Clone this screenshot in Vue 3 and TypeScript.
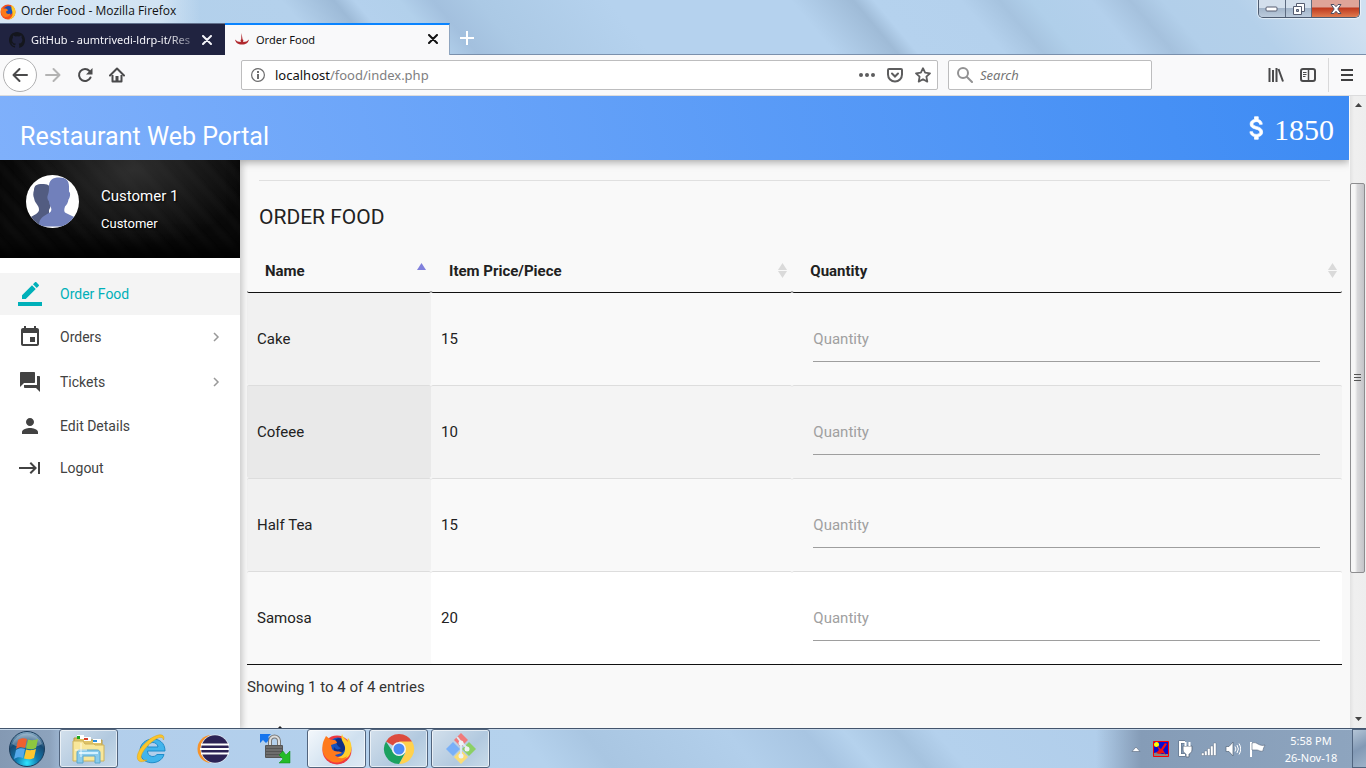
<script setup lang="ts">
import { ref } from 'vue'

interface Item { name: string; price: number; qty: string }
interface MenuItem { label: string; icon: string; sub?: boolean; active?: boolean }

const items = ref<Item[]>([
  { name: 'Cake', price: 15, qty: '' },
  { name: 'Cofeee', price: 10, qty: '' },
  { name: 'Half Tea', price: 15, qty: '' },
  { name: 'Samosa', price: 20, qty: '' },
])

const menu: MenuItem[] = [
  { label: 'Order Food', active: true, icon: 'M17.75 7L14 3.25l-10 10V17h3.75l10-10zm2.96-2.96c.39-.39.39-1.02 0-1.41L18.37.29c-.39-.39-1.02-.39-1.41 0L15 2.25 18.75 6l1.96-1.96zM0 20h24v4H0z' },
  { label: 'Orders', sub: true, icon: 'M17 12h-5v5h5v-5zM16 1v2H8V1H6v2H5c-1.11 0-1.99.9-1.99 2L3 19c0 1.1.89 2 2 2h14c1.1 0 2-.9 2-2V5c0-1.1-.9-2-2-2h-1V1h-2zm3 18H5V8h14v11z' },
  { label: 'Tickets', sub: true, icon: 'M21 6h-2v9H6v2c0 .55.45 1 1 1h11l4 4V7c0-.55-.45-1-1-1zm-4 6V3c0-.55-.45-1-1-1H3c-.55 0-1 .45-1 1v14l4-4h10c.55 0 1-.45 1-1z' },
  { label: 'Edit Details', icon: 'M12 12c2.21 0 4-1.79 4-4s-1.79-4-4-4-4 1.79-4 4 1.79 4 4 4zm0 2c-2.67 0-8 1.34-8 4v2h16v-2c0-2.66-5.33-4-8-4z' },
  { label: 'Logout', icon: 'M11.59 7.41L15.17 11H1v2h14.17l-3.59 3.59L13 18l6-6-6-6-1.41 1.41zM20 6v12h2V6h-2z' },
]

const columns = [
  { label: 'Name', cls: 'c-name', sorted: true },
  { label: 'Item Price/Piece', cls: 'c-price', sorted: false },
  { label: 'Quantity', cls: 'c-qty', sorted: false },
]

const search = ref('')
</script>

<template>
  <div class="desktop">
    <div class="aero">
      <div class="titlebar">
        <svg class="fx-small" viewBox="0 0 32 32" aria-hidden="true">
          <circle cx="16" cy="16" r="15" fill="#f5501e" />
          <circle cx="17" cy="13" r="9" fill="#1d4fb5" />
          <path d="M23 2c5 3 8 8 8 14a15 15 0 0 1-15 15c6-2 10-7 9-13 0-5-3-7-2-16z" fill="#ffc928" />
          <path d="M3 7l5 3c4-2 7 0 8 3l-4 2c0 5 5 6 9 4-1 5-6 8-11 7C3 24 0 15 3 7z" fill="#fb7a1b" />
        </svg>
        <span class="title">Order Food - Mozilla Firefox</span>
        <div class="winbtns">
          <button class="wb min" aria-label="Minimize"><svg width="14" height="8"><rect x="1" y="2" width="11" height="4" rx="1" fill="#fff" stroke="#565d70" /></svg></button>
          <button class="wb max" aria-label="Restore"><svg width="14" height="14"><g fill="#fff" stroke="#565d70"><path d="M4.500 1.500h8v8h-8z" /><path d="M1.500 4.500h8v8h-8z" /><path d="M4.500 7.500h2v2h-2z" fill="#9aabc2" /></g></svg></button>
          <button class="wb close" aria-label="Close"><svg width="14" height="12" viewBox="0 0 14 12"><path d="M2 1.500h3l2 2.200 2-2.200h3L8.800 6l3.200 4.500H9L7 8.300l-2 2.200H2L5.200 6z" fill="#fff" stroke="#4c5064" /></svg></button>
        </div>
      </div>
      <div class="tabs">
        <div class="tab dark">
          <svg class="gh" viewBox="0 0 16 16" aria-hidden="true"><path fill="#14161d" d="M8 0C3.580 0 0 3.580 0 8c0 3.540 2.290 6.530 5.470 7.590.4.070.550-.170.550-.380V13.700c-2.010.370-2.530-.490-2.690-.940-.360-.920-.900-1.300-1.230-1.430.9-.5 1.500.2 1.900.9.700 1.200 1.900.9 2.300.650.070-.520.280-.870.510-1.070-1.780-.200-3.640-.890-3.640-3.950 0-.870.310-1.590.820-2.150-.080-.200-.360-1.020.080-2.120 0 0 .670-.210 2.200.820a7.600 7.600 0 0 1 4 0c1.530-1.040 2.200-.820 2.200-.820.440 1.100.160 1.920.080 2.120.510.560.820 1.270.820 2.150 0 3.070-1.870 3.750-3.650 3.950.290.250.540.730.540 1.480v2.200c0 .210.150.460.550.380A8 8 0 0 0 16 8c0-4.420-3.580-8-8-8z" /></svg>
          <span class="tabtext fade">GitHub - aumtrivedi-ldrp-it/Res</span>
          <button class="x" aria-label="Close tab"><svg width="10" height="10"><path d="M1 1l8 8M9 1L1 9" stroke="currentColor" stroke-width="2" stroke-linecap="round" /></svg></button>
        </div>
        <div class="tab live">
          <svg class="gh" viewBox="0 0 16 16" aria-hidden="true"><path d="M7.500 2l1.100 6.500c1 0 1 1.500.4 2.500 2.500 0 4.500-.8 6-2.500-.5 3-3 5-7 5s-6.500-2-7-5c1.500 1.700 3.500 2.500 6 2.500-.6-1-.6-2.500.2-2.500z" fill="#b0282d" /></svg>
          <span class="tabtext">Order Food</span>
          <button class="x" aria-label="Close tab"><svg width="10" height="10"><path d="M1 1l8 8M9 1L1 9" stroke="currentColor" stroke-width="2" stroke-linecap="round" /></svg></button>
        </div>
        <button class="newtab" aria-label="New tab"><svg width="14" height="14"><path d="M7 0v14M0 7h14" stroke="#fff" stroke-width="2" /></svg></button>
      </div>
    </div>

    <div class="toolbar">
      <button class="nav back" aria-label="Back"><svg width="16" height="16"><path d="M15 8H2M7.500 2L1.500 8l6 6" fill="none" stroke="#4a4a4b" stroke-width="2" stroke-linecap="round" stroke-linejoin="round" /></svg></button>
      <button class="nav" aria-label="Forward"><svg width="16" height="16"><path d="M1 8h13M8.500 2l6 6-6 6" fill="none" stroke="#b3b3b3" stroke-width="2" stroke-linecap="round" stroke-linejoin="round" /></svg></button>
      <button class="nav" aria-label="Reload"><svg width="16" height="16"><path d="M13.500 10.500a6 6 0 1 1-1-6.500" fill="none" stroke="#4a4a4b" stroke-width="2" stroke-linecap="round" /><path d="M15.500 1v6.500H9z" fill="#4a4a4b" /></svg></button>
      <button class="nav" aria-label="Home"><svg width="16" height="16"><path d="M1 8.500L8 1.500l7 7" fill="none" stroke="#4a4a4b" stroke-width="2" stroke-linecap="round" stroke-linejoin="round" /><path d="M3.500 8v6.500h9V8" fill="none" stroke="#4a4a4b" stroke-width="2" stroke-linejoin="round" /><path d="M6.500 9h3v6h-3z" fill="#4a4a4b" /></svg></button>
      <div class="urlbar">
        <svg width="14" height="14" aria-hidden="true"><circle cx="7" cy="7" r="6.400" fill="none" stroke="#6d6d6e" stroke-width="1.200" /><path d="M7 6v5M7 3v2" stroke="#6d6d6e" stroke-width="2" /></svg>
        <span class="url">localhost<span>/food/index.php</span></span>
        <button aria-label="Page actions"><svg width="16" height="16" fill="#5d5d5e"><circle cx="2" cy="8" r="2" /><circle cx="8" cy="8" r="2" /><circle cx="14" cy="8" r="2" /></svg></button>
        <button aria-label="Pocket"><svg width="16" height="16"><path d="M2 2h12c.6 0 1 .4 1 1v4.500a7 7 0 0 1-14 0V3c0-.6.400-1 1-1z" fill="none" stroke="#5d5d5e" stroke-width="2" /><path d="M5 6.500l3 3 3-3" fill="none" stroke="#5d5d5e" stroke-width="2" stroke-linecap="round" /></svg></button>
        <button aria-label="Bookmark"><svg width="16" height="16"><path d="M8 1.200l2.100 4.500 4.900.6-3.600 3.400.9 4.900L8 12.200l-4.300 2.400.9-4.900L1 6.300l4.900-.6z" fill="none" stroke="#5d5d5e" stroke-width="1.800" stroke-linejoin="round" /></svg></button>
      </div>
      <div class="searchbar">
        <svg width="16" height="16" aria-hidden="true"><circle cx="6" cy="6" r="5" fill="none" stroke="#929293" stroke-width="2" /><path d="M10 10l5 5" stroke="#929293" stroke-width="2" stroke-linecap="round" /></svg>
        <input v-model="search" type="text" placeholder="Search" aria-label="Search" />
      </div>
      <div class="tools">
        <button aria-label="Library"><svg width="16" height="16"><path d="M1.500 1v14M5 3v12M8.500 1v14M10.500 2l4.500 12.500" stroke="#4a4a4b" stroke-width="2" /></svg></button>
        <button aria-label="Sidebars"><svg width="16" height="14"><rect x="1" y="1" width="14" height="12" rx="2" fill="none" stroke="#4a4a4b" stroke-width="2" /><path d="M8.500 1v12" stroke="#4a4a4b" stroke-width="1.500" /><path d="M3 4.500h3.500M3 6.500h3.500M3 8.500h2.500" stroke="#4a4a4b" /></svg></button>
        <span class="divider"></span>
        <button aria-label="Menu"><svg width="12" height="12"><path d="M0 1h12M0 6h12M0 11h12" stroke="#3f3f40" stroke-width="2" /></svg></button>
      </div>
    </div>

    <div class="viewport">
      <div class="page">
        <header class="appbar">
          <h1>Restaurant Web Portal</h1>
          <div class="balance">
            <svg viewBox="0 0 24 24" aria-hidden="true"><path fill="#fff" stroke="#fff" stroke-width=".6" d="M11.800 10.900c-2.270-.590-3-1.200-3-2.150 0-1.090 1.010-1.850 2.700-1.850 1.780 0 2.440.850 2.500 2.100h2.210c-.070-1.720-1.120-3.300-3.210-3.810V3h-3v2.160c-1.940.420-3.500 1.680-3.500 3.610 0 2.310 1.910 3.460 4.700 4.130 2.500.6 3 1.480 3 2.410 0 .690-.490 1.790-2.700 1.790-2.060 0-2.870-.920-2.980-2.100h-2.200c.120 2.190 1.760 3.420 3.680 3.830V21h3v-2.150c1.950-.370 3.500-1.500 3.500-3.550 0-2.840-2.430-3.810-4.700-4.400z" /></svg>
            <span>1850</span>
          </div>
        </header>
        <div class="body">
          <aside class="side">
            <div class="user">
              <svg class="avatar" viewBox="0 0 53 53" role="img" aria-label="Avatar">
                <defs><clipPath id="av"><circle cx="26.500" cy="26.500" r="26.500" /></clipPath></defs>
                <g clip-path="url(#av)">
                  <path fill="#fff" d="M0 0h53v53H0z" />
                  <path fill="#525c81" d="M8 15c0-4.500 3-6 8-6s9 1 9 6v13c0 3-1 5-2 7v7l-8 8H5v-8c3-2 8-4 8-7 0-3-1-4-3-7-1-1-1.500-3-2-5-1-2-1-5 0-8z" />
                  <path fill="#7180bb" d="M23 11c0-6 4-8.500 10-8.500 7 0 10 3 10 9v5c2 2 1 6-.5 8-.5 3-1.500 5-3.500 7-1 3-1 5 0 6 3 2 7 3 10 5v9H13c0-7 2-9 9-13 3-1 4-3 3-6-1-2-2-4-2-6-2-2-2-5-1-7 1-3 1-5 1-8z" />
                </g>
              </svg>
              <div class="who"><strong>Customer 1</strong><span>Customer</span></div>
            </div>
            <nav>
              <a v-for="m in menu" :key="m.label" href="#" :class="{ active: m.active, sub: m.sub }">
                <svg width="24" height="24" viewBox="0 0 24 24" aria-hidden="true"><path :d="m.icon" fill="currentColor" /></svg>
                <span>{{ m.label }}</span>
                <svg v-if="m.sub" class="chev" width="8" height="10" viewBox="0 0 8 10" aria-hidden="true"><path d="M2 1l4 4-4 4" fill="none" stroke="#999" stroke-width="1.500" /></svg>
              </a>
            </nav>
          </aside>
          <main>
            <hr />
            <h2>ORDER FOOD</h2>
            <table>
              <thead>
                <tr>
                  <th v-for="c in columns" :key="c.label" :class="c.cls" scope="col">
                    <div class="th">
                      <span>{{ c.label }}</span>
                      <svg width="9" height="15" viewBox="0 0 9 15" aria-hidden="true">
                        <path d="M0 7l4.500-7L9 7z" :fill="c.sorted ? '#8080dc' : '#dadada'" />
                        <path v-if="!c.sorted" d="M0 8l4.500 7L9 8z" fill="#dadada" />
                      </svg>
                    </div>
                  </th>
                </tr>
              </thead>
              <tbody>
                <tr v-for="(it, i) in items" :key="it.name">
                  <td>{{ it.name }}</td>
                  <td>{{ it.price }}</td>
                  <td class="qty"><input :id="`q${i}`" v-model="it.qty" type="text" placeholder="Quantity" :aria-label="`Quantity of ${it.name}`" /></td>
                </tr>
              </tbody>
            </table>
            <p class="info">Showing 1 to 4 of 4 entries</p>
            <svg class="peek" width="10" height="6" viewBox="0 0 10 6" aria-hidden="true"><path d="M0 5l5-5 5 5z" fill="#222" /></svg>
          </main>
        </div>
      </div>
      <div class="scroll">
        <svg width="7" height="4" aria-hidden="true"><path d="M0 4l3.500-4L7 4z" fill="#444" /></svg>
        <div class="track"><div class="thumb"><i></i><i></i><i></i></div></div>
        <svg width="7" height="4" aria-hidden="true"><path d="M0 0l3.500 4L7 0z" fill="#444" /></svg>
      </div>
    </div>

    <footer class="taskbar">
      <button class="start" aria-label="Start">
        <svg width="38" height="38" viewBox="0 0 38 38">
          <defs>
            <radialGradient id="orb" cx=".5" cy=".9" r=".9"><stop offset="0" stop-color="#2ee6ff" /><stop offset=".35" stop-color="#1179ae" /><stop offset=".7" stop-color="#174a73" /><stop offset="1" stop-color="#8fb2cc" /></radialGradient>
          </defs>
          <circle cx="19" cy="19" r="17.500" fill="url(#orb)" stroke="#1b3c5b" />
          <path d="M4 14a16 16 0 0 1 30 0c-8 5-22 5-30 0z" fill="#fff" opacity=".28" />
          <path d="M10 10c3-2 6-2 9-1l-2 9c-3-1-6-1-9 1z" fill="#ee6030" />
          <path d="M20 9.500c3 1 6 1 10-.5l-2 9c-4 2-7 1-10 .5z" fill="#8ec73f" />
          <path d="M8 20c3-2 6-2 9-1l-2 9c-3-1-6-1-9 1z" fill="#55a9ea" />
          <path d="M18 19.500c3 1 6 1 10-.5l-2 9c-4 2-7 1-10 .5z" fill="#fdc72f" />
        </svg>
      </button>
      <div class="apps">
        <button class="app open" aria-label="Explorer">
          <svg width="34" height="32" viewBox="0 0 34 32">
            <path d="M2 5h10l2 2h16v20H2z" fill="#dfc468" stroke="#b89a42" />
            <path d="M5 2h7v4H5z" fill="#fff" /><path d="M5 3h3v3H5z" fill="#1fa81f" />
            <path d="M12 4h7v4h-7z" fill="#fff" /><path d="M12 5h4v2h-4z" fill="#d6402c" />
            <path d="M21 6h8v4h-8z" fill="#fff" /><path d="M21 7h4v2h-4z" fill="#2a8ede" />
            <path d="M1 8h10l2 3h9l1 1h9v16H1z" fill="#f8e79b" stroke="#cdb25b" />
            <path d="M5 30V20c0-2 1-3 3-3h17c2 0 3 1 3 3v10h-5v-7H11v7z" fill="#8acbec" stroke="#5aa6cc" />
            <path d="M7 20h19" stroke="#d4f1ff" stroke-width="2" /><path d="M9 10v14M3 17h12" stroke="#fff" opacity=".8" />
          </svg>
        </button>
        <button class="app" aria-label="Internet Explorer">
          <svg width="32" height="32" viewBox="0 0 32 32">
            <path d="M30 18H12.500c0 6 7 7 9.500 3.500h7C26 33 5 33 5 18 5 3 30 1 30 18zM12.500 14H23c-.5-6-10-6-10.500 0z" fill="#41b4ec" stroke="#1f8cc9" />
            <path d="M28.500 7c2.500-8-8-6-16 1C3 16 0 25 4 28c2 1.500 5 .5 8-1-6 1-8-2-3.500-9C13 11 27-1 28.500 7z" fill="#fbc62b" stroke="#dda113" stroke-width=".5" />
          </svg>
        </button>
        <button class="app" aria-label="Eclipse">
          <svg width="32" height="32" viewBox="0 0 32 32">
            <circle cx="14.500" cy="16" r="14" fill="#f7932a" /><circle cx="18" cy="16" r="14.500" fill="#dfeaf4" />
            <circle cx="18" cy="16" r="13.800" fill="#2c2255" /><path d="M4 11.500h28M3 16h29M4 20.500h28" stroke="#fff" stroke-width="2" />
          </svg>
        </button>
        <button class="app" aria-label="Sync">
          <svg width="32" height="32" viewBox="0 0 32 32">
            <path d="M1 1h11L9 4l2 2-4 4-3-3-3 3z" fill="#1675ee" />
            <path d="M11 14V8c0-6 9-6 9 0v6" fill="none" stroke="#777" stroke-width="4" />
            <path d="M11 14V8c0-6 9-6 9 0v6" fill="none" stroke="#ddd" stroke-width="2" />
            <rect x="6" y="12" width="18" height="13" rx="1" fill="#555" /><path d="M7 14h16M7 17h16M7 20h16M7 23h16" stroke="#858585" />
            <path d="M31 30H20l4-4-4-4 4-4 3 4 4-4z" fill="#24bb28" stroke="#0b8810" stroke-width=".5" />
          </svg>
        </button>
        <button class="app open bright" aria-label="Firefox">
          <svg width="32" height="32" viewBox="0 0 32 32">
            <circle cx="16" cy="17" r="14.500" fill="#ef3840" />
            <circle cx="17" cy="14" r="9.500" fill="#1753bf" />
            <path d="M14 7c3-3 8-2 10 2 2 5 0 10-5 11-4 0-7-2-6-6 2 3 5 3 7 1-3-1-4-3-6-8z" fill="#102f84" />
            <path d="M21 1c-2 6 2 8 3 13 1 8-6 12-12 10 4 5 14 4 17-3 3-6 1-13-2-16-1 2 0 4 0 4-2-3-5-4-6-8z" fill="#ffcf2d" />
            <path d="M3 7c-3 7-2 16 5 20 7 5 16 2 18-4-3 3-9 3-12-1l7-2c-2-3-7 0-10-4l-1-4 6-2c0-3-4-4-6-3L5 3z" fill="#ff7a1c" />
          </svg>
        </button>
        <button class="app open" aria-label="Chrome">
          <svg width="32" height="32" viewBox="0 0 32 32">
            <path d="M16 16L3 8.500a15 15 0 0 1 26 0z" fill="#dc4b3e" /><path d="M16 8.500h13.100A15 15 0 0 1 16 31l6.500-11z" fill="#ffd14d" /><path d="M3 8.500A15 15 0 0 0 16 31l6-11-12-1z" fill="#1ba160" />
            <circle cx="16" cy="16" r="7" fill="#f5f5f5" /><circle cx="16" cy="16" r="5.500" fill="#4c8bf5" />
          </svg>
        </button>
        <button class="app open" aria-label="Git">
          <svg width="34" height="34" viewBox="0 0 34 34">
            <path d="M17 1l7 7-7 7-7-7z" fill="#f07b7b" /><path d="M25 10l7 7-7 7-7-7z" fill="#8bd065" /><path d="M17 18l7 7-7 7-7-7z" fill="#fbdd75" /><path d="M9 10l7 7-7 7-7-7z" fill="#79b0f8" />
            <path d="M13 5l4 5v14M17 10l6 6" stroke="#dfe7ef" stroke-width="2" fill="none" /><circle cx="17" cy="11" r="2.500" fill="#eef2f6" /><circle cx="23" cy="17" r="2.500" fill="#eef2f6" /><circle cx="17" cy="24" r="2.500" fill="#eef2f6" />
          </svg>
        </button>
      </div>
      <div class="tray">
        <svg width="10" height="8"><path d="M1 6.500l4-4.500 4 4.500z" fill="#fff" stroke="#55657a" stroke-width=".6" /></svg>
        <svg width="16" height="16"><path d="M.5.5h15v15H.5z" fill="#0a0ad0" stroke="red" /><circle cx="3.500" cy="3.500" r="2.500" fill="#ff0" /><path d="M1 15v-3l4-1 3 2h7v2z" fill="#858585" /><path d="M4 5l4 3 4-6 2 1-4 6 3 5-3-2-4 1-3-1 3-3z" fill="#f01010" /></svg>
        <svg width="16" height="18"><path d="M8 2H3v13h5" fill="none" stroke="#55657a" stroke-width="3" /><path d="M8 2H3v13h5" fill="none" stroke="#fff" stroke-width="2" /><path d="M6 6h9v4c0 2-2 4-3 4v3H9v-3c-1 0-3-2-3-4z" fill="#fff" stroke="#55657a" stroke-width=".8" /><path d="M8.500 2v4M12.500 2v4" stroke="#fff" stroke-width="2" /></svg>
        <svg width="16" height="14"><g fill="#fff" stroke="#55657a" stroke-width=".4"><path d="M.5 11h2.500v2.500H.5zM3.500 9H6v4.500H3.500zM6.500 6.500H9v7H6.500zM9.500 4H12v9.500H9.500zM12.500 1H15v12.500h-2.500z" /></g></svg>
        <svg width="16" height="16"><path d="M1 5.500h3L8 1v14l-4-4.500H1z" fill="#fff" stroke="#55657a" stroke-width=".7" /><path d="M10 5.500q1.800 2.500 0 5M12 4q2.800 4 0 8M14 2.500q3.500 5.500 0 11" fill="none" stroke="#fff" /></svg>
        <svg width="17" height="16"><path d="M2 1v15" stroke="#fff" stroke-width="2" /><path d="M3 2c3-1 4 0 6 1s4 2 7 1c-1 2-2 4-2 6-3 1-4-1-6-1H3z" fill="#fff" stroke="#55657a" stroke-width=".6" /></svg>
        <div class="clock"><span>5:58 PM</span><span>26-Nov-18</span></div>
        <button class="peekbtn" aria-label="Show desktop"></button>
      </div>
    </footer>
  </div>
</template>

<style>
body { margin: 0; overflow: hidden; }
</style>

<style scoped>
* { box-sizing: border-box; }
button { border: 0; padding: 0; background: none; font: inherit; color: inherit; display: flex; align-items: center; justify-content: center; flex: none; }
svg { display: block; flex: none; }
.desktop { height: 100vh; display: flex; flex-direction: column; font-family: "Noto Sans", "Open Sans", sans-serif; font-size: 12px; color: #111; }

.aero { height: 55px; flex: none; border-bottom: 1px solid #7a90ac; background: linear-gradient(50deg, #b0cfea 0, #b4d1ec 250px, #9dbad7 290px, #b4d1ed 306px, #b2d0eb 340px, #a3c0de 366px, #abc9e5 400px, #b5d2ee 500px, #b5d2ee 640px, #9fbbd7 688px, #b5d2ee 704px, #b4d1ed 770px, #a6c3df 800px, #b0cfea 825px, #b3d0ec 870px, #a5c1dd 900px, #b2cfea 925px, #b4d0ea 980px, #cfe0f1 1060px); }
.titlebar { height: 23px; display: flex; align-items: center; background: linear-gradient(90deg, rgba(255, 255, 255, .5), rgba(255, 255, 255, .4) 160px, transparent 200px); }
.fx-small { width: 16px; height: 16px; }
.title { margin-left: 5px; flex: 1; font-family: "Open Sans", sans-serif; font-size: 12px; line-height: 20px; padding-bottom: 1px; }
.winbtns { align-self: flex-start; display: flex; height: 18px; margin-right: 6px; border: 1px solid #4d5b70; border-top: 0; border-radius: 0 0 5px 5px; overflow: hidden; box-shadow: 0 0 1px 1px rgba(255, 255, 255, .6); }
.wb { background: linear-gradient(#d3dfec 0 45%, #a3b5ca 50%, #bccbdc); border-right: 1px solid #5d6b80; }
.min { width: 27px; }
.max { width: 26px; }
.close { width: 47px; border-right: 0; background: linear-gradient(#dfa498 0 40%, #bf3a1f 48%, #e07b4f); }
.tabs { height: 32px; display: flex; }
.tab { width: 225px; height: 32px; display: flex; align-items: center; padding: 0 12px 0 9px; border-top: 1px solid #60708c; }
.tab.dark { background: #202340; color: #f5f5fa; }
.tab.live { background: #f9f9fa; border-top: 2px solid #0a84ff; border-right: 1px solid #8fa5bf; padding: 0 10px 2px 9px; }
.gh { width: 16px; height: 16px; margin-right: 6px; }
.tabtext { flex: 1; font-size: 11px; white-space: nowrap; }
.fade { mask-image: linear-gradient(90deg, #000 82%, rgba(0, 0, 0, .2) 100%); }
.x { width: 12px; margin-left: 4px; }
.newtab { width: 34px; height: 30px; }

.toolbar { height: 41px; flex: none; display: flex; align-items: center; background: #f9f9fa; border-bottom: 1px solid #dcdcdd; padding: 0 13px 0 3px; }
.nav { width: 32px; height: 32px; }
.back { width: 34px; height: 34px; border: 1px solid #b0b0b1; border-radius: 50%; background: #fff; }
.urlbar, .searchbar { height: 30px; border: 1px solid #bdbdbe; border-radius: 2px; background: #fff; display: flex; align-items: center; }
.urlbar { flex: 1; margin-left: 108px; padding: 0 6px 0 9px; gap: 12px; }
.url { flex: 1; font-size: 13px; margin-left: -2px; }
.url span { color: #7e7e80; }
.searchbar { width: 204px; margin-left: 10px; padding: 0 8px; gap: 7px; }
.searchbar input { flex: 1; min-width: 0; border: 0; padding: 0; outline: 0; font: italic 13px "Noto Sans", sans-serif; }
.searchbar input::placeholder { color: #757576; opacity: 1; }
.tools { display: flex; align-items: center; margin-left: 116px; gap: 16px; }
.divider { width: 1px; height: 34px; background: #d9d9da; margin: 0 -4px; }

.viewport { flex: 1; min-height: 0; display: flex; background: #f9f9f9; }
.page { flex: 1; min-width: 0; display: flex; flex-direction: column; overflow: hidden; font-family: Roboto, sans-serif; }
.appbar { height: 64px; flex: none; position: relative; z-index: 2; display: flex; align-items: center; justify-content: space-between; padding: 0 15px 0 20px; color: #fff; background: linear-gradient(75deg, #7fb0fb, #3d8bf4); box-shadow: 0 2px 8px rgba(0, 0, 0, .35); }
.appbar h1 { margin: 0; font-size: 25px; font-weight: 400; line-height: 46px; padding-top: 18px; }
.balance { display: flex; align-items: center; gap: 2px; padding-top: 4px; font-family: "Liberation Serif", serif; font-size: 30px; line-height: 36px; }
.balance svg { width: 30px; height: 30px; margin-bottom: 4px; }
.body { flex: 1; min-height: 0; display: flex; }
.side { width: 240px; flex: none; background: #fff; position: relative; z-index: 3; box-shadow: 2px 2px 7px rgba(0, 0, 0, .22); clip-path: inset(0 -12px 0 0); }
.user { height: 98px; display: flex; padding: 15px 26px; gap: 22px; color: #fff; background: radial-gradient(ellipse at 55% 10%, rgba(62, 62, 62, .7), transparent 62%), repeating-linear-gradient(48deg, #090909 0 5px, #0d0d0d 9px 12px, #070707 17px); box-shadow: inset 0 -20px 20px -10px #000; }
.avatar { width: 53px; height: 53px; }
.who { display: flex; flex-direction: column; padding-top: 9px; text-shadow: 1px 1px 2px #000; }
.who strong { font-weight: 400; font-size: 15px; line-height: 24px; }
.who span { font-size: 13px; line-height: 32px; }
nav { padding-top: 15px; }
nav a { height: 42px; display: flex; align-items: center; padding: 0 20px 0 18px; color: #424242; text-decoration: none; font-size: 14px; }
nav a.sub { height: 45px; padding-bottom: 1px; }
nav a.active { background: #f4f4f4; color: #00b0b9; }
nav a span { margin-left: 18px; flex: 1; }

main { flex: 1; min-width: 0; padding: 20px 7px 0; color: #222; font-size: 15px; }
hr { height: 1px; border: 0; background: #e0e0e0; margin: 0 12px; }
h2 { margin: 20px 12px 18px; font-size: 21px; line-height: 32px; font-weight: 400; }
table { width: 100%; border-collapse: separate; border-spacing: 0; border-bottom: 1px solid #111; table-layout: fixed; }
th { padding: 0 5px 2px 18px; height: 42px; border-bottom: 1px solid #111; border-radius: 2px; text-align: left; font-weight: 700; color: #212121; font-size: 15px; }
.th { display: flex; align-items: center; justify-content: space-between; }
.c-name { width: 184px; }
.c-price { width: 33%; }
td { height: 93px; padding: 0 10px; border-top: 1px solid #ddd; border-radius: 2px; background: #f9f9f9; }
tr:first-child td { height: 92px; border-top: 0; }
td:first-child { background: #f1f1f1; }
tr:nth-child(2) td { background: #f4f4f4; }
tr:nth-child(2) td:first-child { background: #e9e9e9; }
tr:nth-child(4) td { background: #fff; }
tr:nth-child(4) td:first-child { background: #f9f9f9; }
td.qty { padding: 0 22px 0 21px; }
td input { display: block; width: 100%; height: 46px; border: 0; border-bottom: 1px solid #9e9e9e; outline: 0; padding: 0; background: transparent; font: 15px Roboto, sans-serif; color: #222; }
td input::placeholder { color: #a0a0a0; opacity: 1; }
.info { margin: 11px 0 0; line-height: 22px; color: #333; }
.peek { margin: 28px 0 0 28px; }

.scroll { width: 16px; flex: none; margin-left: 1px; display: flex; flex-direction: column; align-items: center; padding: 7px 0; background: linear-gradient(90deg, #e2e2e2, #efefef 4px, #eee); }
.track { flex: 1; align-self: stretch; padding: 76px 1px 0 0; min-height: 0; }
.thumb { height: 73%; border: 1px solid #8d8d8f; border-radius: 2px; background: linear-gradient(90deg, #f6f6f6 30%, #d8d8da 50%, #c4c4c8); display: flex; flex-direction: column; align-items: center; justify-content: center; gap: 2px; }
.thumb i { width: 7px; height: 1px; background: #555; }

.taskbar { height: 40px; flex: none; display: flex; align-items: stretch; border-top: 1px solid #43556d; box-shadow: inset 0 1px 0 #c6d8ea; background: linear-gradient(90deg, #8499b3 0, #8da3bd 50px, transparent 75px calc(100% - 270px), #859cb7 calc(100% - 225px), #8ea5bf 100%), linear-gradient(50deg, #b1cdeb 0, #b5d2ed 420px, #a9c6e2 470px, #b2cfeb 580px, #a8c5e2 640px, #b5d2ed 670px, #a6c3df 710px, #b4d1ed 740px, #b0cdea 900px); }
.start { width: 54px; }
.apps { display: flex; gap: 3px; margin-left: 5px; flex: 1; }
.app { width: 59px; height: 39px; }
.app.open { border: 1px solid #51647d; border-radius: 3px; background: linear-gradient(135deg, #d3e0ec, #b2c9df 60%, #c8dbe9); box-shadow: inset 0 0 0 1px rgba(255, 255, 255, .6); }
.app.bright { background: linear-gradient(135deg, #f4f8fc, #cfe0ef 60%, #dfeaf4); }
.tray { display: flex; align-items: center; gap: 8px; color: #fff; }
.tray svg:first-child { margin-right: 4px; }
.clock { width: 72px; margin: 0 -3px 0 1px; display: flex; flex-direction: column; align-items: center; font-size: 11px; line-height: 17px; padding-top: 1px; }
.peekbtn { width: 14px; height: 39px; border: 1px solid #51657f; border-right: 0; background: linear-gradient(150deg, #b4c5d6, #8299b5 50%, #9db2c8); }
</style>
